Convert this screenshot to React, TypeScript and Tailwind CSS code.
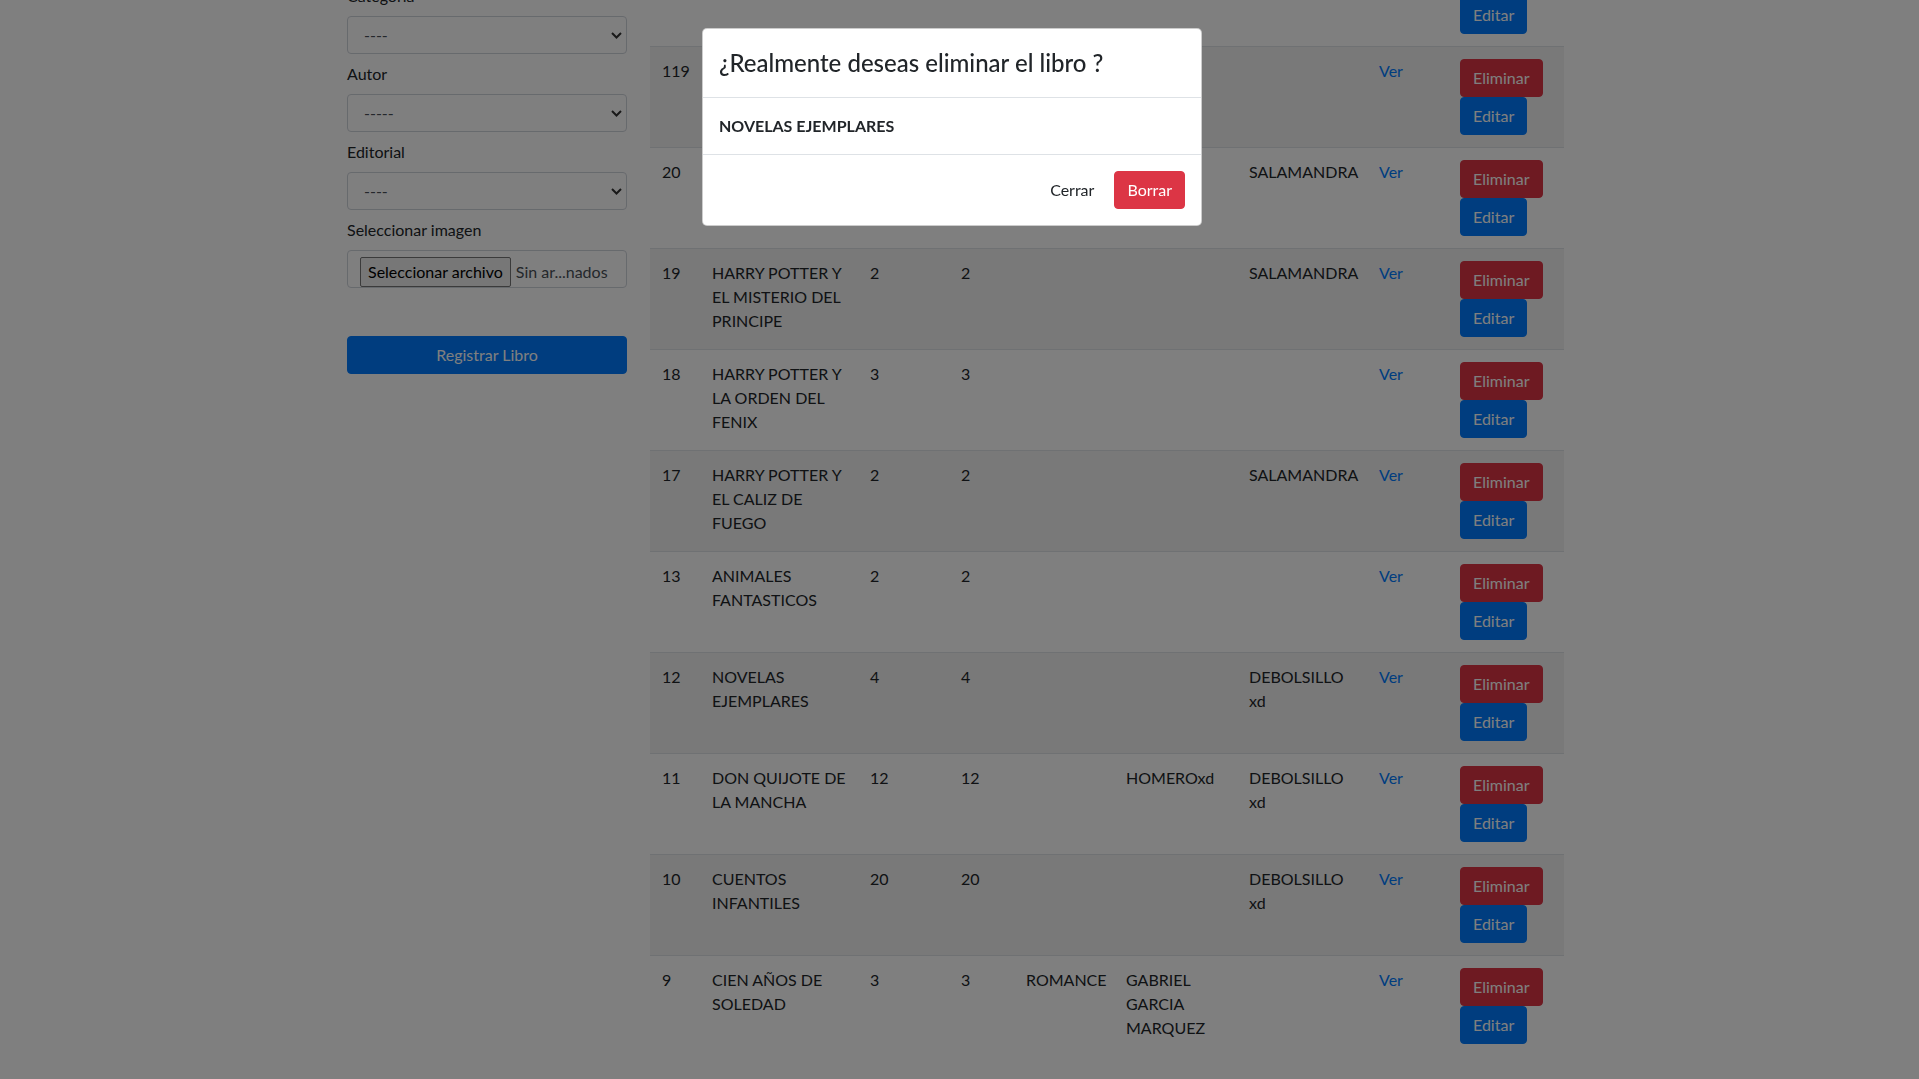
import React from 'react';

type Book = {
  id: string;
  title: string[];
  a: string;
  b: string;
  cat: string;
  autor: string[];
  ed: string[];
  striped: boolean;
};

const books: Book[] = [
  { id: '120', title: ['PRUEBA'], a: '1', b: '1', cat: '', autor: [], ed: [], striped: false },
  { id: '119', title: [], a: '', b: '', cat: '', autor: [], ed: [], striped: true },
  { id: '20', title: ['HARRY POTTER Y', 'LAS RELIQUIAS DE', 'LA MUERTE'], a: '', b: '', cat: '', autor: [], ed: ['SALAMANDRA'], striped: false },
  { id: '19', title: ['HARRY POTTER Y', 'EL MISTERIO DEL', 'PRINCIPE'], a: '2', b: '2', cat: '', autor: [], ed: ['SALAMANDRA'], striped: true },
  { id: '18', title: ['HARRY POTTER Y', 'LA ORDEN DEL', 'FENIX'], a: '3', b: '3', cat: '', autor: [], ed: [], striped: false },
  { id: '17', title: ['HARRY POTTER Y', 'EL CALIZ DE', 'FUEGO'], a: '2', b: '2', cat: '', autor: [], ed: ['SALAMANDRA'], striped: true },
  { id: '13', title: ['ANIMALES', 'FANTASTICOS'], a: '2', b: '2', cat: '', autor: [], ed: [], striped: false },
  { id: '12', title: ['NOVELAS', 'EJEMPLARES'], a: '4', b: '4', cat: '', autor: [], ed: ['DEBOLSILLO', 'xd'], striped: true },
  { id: '11', title: ['DON QUIJOTE DE', 'LA MANCHA'], a: '12', b: '12', cat: '', autor: ['HOMEROxd'], ed: ['DEBOLSILLO', 'xd'], striped: false },
  { id: '10', title: ['CUENTOS', 'INFANTILES'], a: '20', b: '20', cat: '', autor: [], ed: ['DEBOLSILLO', 'xd'], striped: true },
  { id: '9', title: ['CIEN AÑOS DE', 'SOLEDAD'], a: '3', b: '3', cat: 'ROMANCE', autor: ['GABRIEL', 'GARCIA', 'MARQUEZ'], ed: [], striped: false },
];

function Lines({ items }: { items: string[] }) {
  return (
    <>
      {items.map((l) => (
        <div key={l} className="whitespace-nowrap">{l}</div>
      ))}
    </>
  );
}

function SelectBox({ value }: { value: string }) {
  return (
    <div className="h-[38px] flex items-center justify-between bg-white border border-[#ced4da] rounded-[4px] pl-[16px] pr-[4px] text-[#495057]">
      <span>{value}</span>
      <svg width="11" height="7" viewBox="0 0 11 7">
        <path d="M1 1 L5.5 5.5 L10 1" fill="none" stroke="#333" strokeWidth="2" />
      </svg>
    </div>
  );
}

function Field({ label, children }: { label: string; children: React.ReactNode }) {
  return (
    <div className="mb-2">
      <label className="block mb-2 text-[#212529]">{label}</label>
      {children}
    </div>
  );
}

export default function App() {
  return (
    <div className="relative min-h-screen bg-white overflow-hidden font-['Lato',sans-serif] text-base leading-6 text-[#212529]">
      {/* page content, scrolled */}
      <div className="flex gap-[23px] pl-[347px] mt-[-55px]">
        {/* form column */}
        <div className="w-[280px] pt-[39px] shrink-0">
          <Field label="Categoria">
            <SelectBox value="----" />
          </Field>
          <Field label="Autor">
            <SelectBox value="-----" />
          </Field>
          <Field label="Editorial">
            <SelectBox value="----" />
          </Field>
          <Field label="Seleccionar imagen">
            <div className="h-[38px] border border-[#ced4da] rounded-[4px] pl-3 pt-[6px] overflow-hidden">
              <div className="flex items-center h-[30px]">
                <span className="h-[30px] flex items-center px-[7px] bg-[#efefef] border border-[#767676] rounded-[2px] text-black whitespace-nowrap">
                  Seleccionar archivo
                </span>
                <span className="ml-[5px] text-[#495057] whitespace-nowrap">Sin ar...nados</span>
              </div>
            </div>
          </Field>
          <button className="mt-[40px] w-full h-[38px] bg-[#007bff] border border-[#007bff] rounded-[4px] text-white">
            Registrar Libro
          </button>
        </div>

        {/* table column */}
        <div className="w-[914px] shrink-0">
          {books.map((bk) => (
            <div
              key={bk.id}
              className={`grid grid-cols-[50px_158px_91px_65px_100px_123px_130px_81px_116px] border-t border-[#dee2e6] ${bk.striped ? 'bg-[#f2f2f2]' : 'bg-white'}`}
            >
              <div className="p-3">{bk.id}</div>
              <div className="p-3"><Lines items={bk.title} /></div>
              <div className="p-3">{bk.a}</div>
              <div className="p-3">{bk.b}</div>
              <div className="p-3">{bk.cat}</div>
              <div className="p-3"><Lines items={bk.autor} /></div>
              <div className="p-3"><Lines items={bk.ed} /></div>
              <div className="p-3"><span className="text-[#007bff]">Ver</span></div>
              <div className="p-3 flex flex-col items-start">
                <button className="h-[38px] px-3 bg-[#dc3545] border border-[#dc3545] rounded-[4px] text-white">Eliminar</button>
                <button className="h-[38px] px-3 bg-[#007bff] border border-[#007bff] rounded-[4px] text-white">Editar</button>
              </div>
            </div>
          ))}
        </div>
      </div>

      {/* backdrop */}
      <div className="fixed inset-0 bg-black/50" />

      {/* modal */}
      <div className="fixed inset-0 pr-[15px] pt-[28px] flex justify-center items-start">
        <div className="w-[500px] bg-white border border-black/20 rounded-[5px]">
          <div className="p-4 border-b border-[#dee2e6]">
            <h4 className="text-[24px] leading-[36px] font-medium text-[#212529]">¿Realmente deseas eliminar el libro ?</h4>
          </div>
          <div className="p-4">
            <b className="font-bold">NOVELAS EJEMPLARES</b>
          </div>
          <div className="p-3 border-t border-[#dee2e6] flex justify-end">
            <button className="m-1 h-[38px] px-3 text-[#212529]">Cerrar</button>
            <button className="m-1 h-[38px] px-3 bg-[#dc3545] border border-[#dc3545] rounded-[4px] text-white">Borrar</button>
          </div>
        </div>
      </div>
    </div>
  );
}
